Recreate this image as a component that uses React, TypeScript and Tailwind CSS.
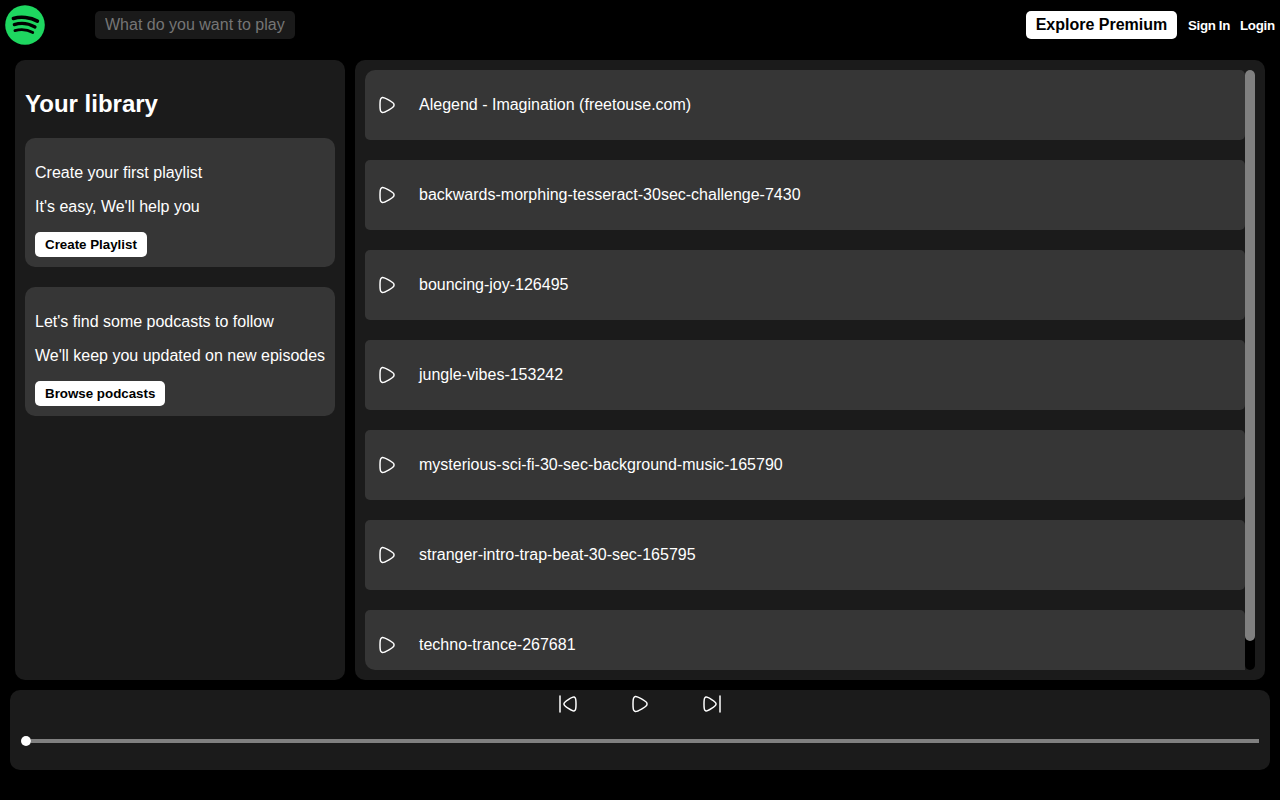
import { type ReactNode } from "react";

const PLAY =
  "M18.8906 12.846C18.5371 14.189 16.8667 15.138 13.5257 17.0361C10.296 18.8709 8.6812 19.7884 7.37983 19.4196C6.8418 19.2671 6.35159 18.9776 5.95624 18.5787C5 17.6139 5 15.7426 5 12C5 8.2574 5 6.3861 5.95624 5.42132C6.35159 5.02245 6.8418 4.73288 7.37983 4.58042C8.6812 4.21165 10.296 5.12907 13.5257 6.96393C16.8667 8.86197 18.5371 9.811 18.8906 11.154C19.0365 11.7084 19.0365 12.2916 18.8906 12.846Z";
const PREV =
  "M8.06492 12.6258C8.31931 13.8374 9.67295 14.7077 12.3802 16.4481C15.3247 18.3411 16.797 19.2876 17.9895 18.9229C18.3934 18.7994 18.7654 18.5823 19.0777 18.2876C20 17.4178 20 15.6118 20 12C20 8.38816 20 6.58224 19.0777 5.71235C18.7654 5.41773 18.3934 5.20057 17.9895 5.07707C16.797 4.71243 15.3247 5.6589 12.3802 7.55186C9.67295 9.29233 8.31931 10.1626 8.06492 11.3742C7.97836 11.7865 7.97836 12.2135 8.06492 12.6258Z";

const songs = [
  "Alegend - Imagination (freetouse.com)",
  "backwards-morphing-tesseract-30sec-challenge-7430",
  "bouncing-joy-126495",
  "jungle-vibes-153242",
  "mysterious-sci-fi-30-sec-background-music-165790",
  "stranger-intro-trap-beat-30-sec-165795",
  "techno-trance-267681",
];

function Icon({ children }: { children: ReactNode }) {
  return (
    <svg viewBox="0 0 24 24" className="size-6 shrink-0" fill="none" stroke="white" strokeWidth="1.5" strokeLinecap="round" strokeLinejoin="round">
      {children}
    </svg>
  );
}

function Logo() {
  return (
    <svg viewBox="0 0 40 40" className="size-10">
      <circle cx="20" cy="20" r="19.8" fill="#1ed760" />
      <g fill="none" stroke="black" strokeLinecap="round">
        <path d="M8.4 13.5C15.5 11.3 25.5 12.2 32.4 16.1" strokeWidth="3.6" />
        <path d="M9.3 19.6C16 17.6 23.8 18.5 30 22" strokeWidth="3.2" />
        <path d="M9.9 25.6C16 24.1 22.3 24.5 27.8 27.5" strokeWidth="2.7" />
      </g>
    </svg>
  );
}

function LibraryCard({ title, text, action }: { title: string; text: string; action: string }) {
  return (
    <div className="flex h-[129px] flex-col items-start rounded-[10px] bg-[#363636] px-2.5 pt-[26px]">
      <p className="leading-[18px]">{title}</p>
      <p className="mt-4 leading-[18px] whitespace-nowrap">{text}</p>
      <button className="mt-4 h-[25px] rounded-[5px] bg-white px-2.5 text-[13.333px] leading-[15px] font-bold text-black">
        {action}
      </button>
    </div>
  );
}

export default function App() {
  return (
    <div className="flex h-[800px] w-[1280px] flex-col overflow-hidden bg-black font-['Liberation_Sans',Arial,sans-serif] text-base text-white">
      <header className="flex h-[50px] shrink-0 items-center px-[5px]">
        <Logo />
        <input
          className="ml-[50px] h-7 w-[200px] rounded-[5px] bg-[#1a1a1a] px-2.5 text-base placeholder:text-[#757575]"
          placeholder="What do you want to play"
        />
        <nav className="ml-auto flex items-center text-[13.333px] font-bold">
          <button className="h-7 w-[151px] rounded-[5px] bg-white text-base leading-[18px] font-bold whitespace-nowrap text-black">Explore Premium</button>
          <button className="ml-[11px] w-[42px] pt-px text-left tracking-[-0.35px] whitespace-nowrap">Sign In</button>
          <button className="ml-2.5 w-[35px] pt-px text-left tracking-[-0.3px] whitespace-nowrap">Login</button>
        </nav>
      </header>

      <main className="mt-2.5 flex h-[620px] shrink-0 gap-2.5 px-[15px]">
        <aside className="w-[330px] rounded-[10px] bg-[#1b1b1b] px-2.5 pt-[30px]">
          <h2 className="text-2xl leading-7 font-bold">Your library</h2>
          <div className="mt-5 flex flex-col gap-5">
            <LibraryCard title="Create your first playlist" text="It's easy, We'll help you" action="Create Playlist" />
            <LibraryCard title="Let's find some podcasts to follow" text="We'll keep you updated on new episodes" action="Browse podcasts" />
          </div>
        </aside>

        <section className="flex flex-1 rounded-[10px] bg-[#1b1b1b] p-2.5">
          <ul className="flex h-[600px] flex-1 flex-col gap-5 overflow-hidden rounded-l-[10px]">
            {songs.map((song) => (
              <li key={song} className="flex h-[70px] shrink-0 items-center gap-5 rounded-[5px] bg-[#363636] px-2.5">
                <Icon>
                  <path d={PLAY} />
                </Icon>
                <span>{song}</span>
              </li>
            ))}
          </ul>
          <div className="w-2.5 rounded-[5px] bg-black">
            <div className="h-[571px] rounded-[5px] bg-[#808080]" />
          </div>
        </section>
      </main>

      <footer className="mx-2.5 mt-2.5 h-20 shrink-0 rounded-[10px] bg-[#1b1b1b] px-[11px] pt-0.5">
        <div className="flex justify-center gap-12">
          <Icon>
            <path d={PREV} />
            <path d="M4 4V20" />
          </Icon>
          <Icon>
            <path d={PLAY} />
          </Icon>
          <Icon>
            <path d={PREV} transform="matrix(-1 0 0 1 24 0)" />
            <path d="M20 4V20" />
          </Icon>
        </div>
        <div className="mt-5 flex h-2.5 items-center">
          <div className="size-2.5 rounded-full bg-white" />
          <div className="h-1 flex-1 bg-[#808080]" />
        </div>
      </footer>
    </div>
  );
}
